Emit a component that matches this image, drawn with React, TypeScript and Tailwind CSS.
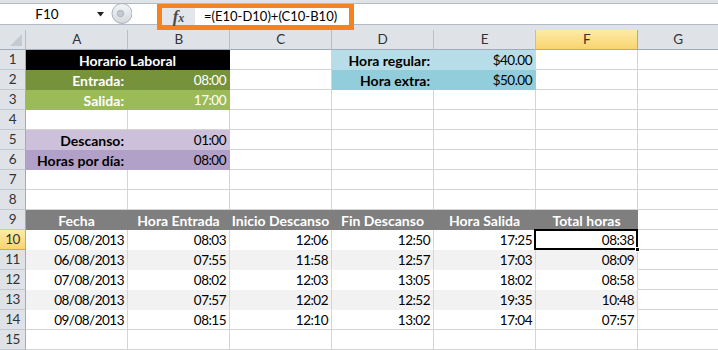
import React from "react";

type Cell = { t?: string; cls?: string; span?: number; sel?: boolean };

const R = "justify-end pr-[3px]";
const CT = "justify-center";
const W = "bg-white border-[#d4d4d4]";
const B = " font-bold text-[14px] tracking-normal ";

const dkGreen = "bg-[#76933c] border-[#76933c] text-white";
const ltGreen = "bg-[#9bbb59] border-[#9bbb59] text-white";
const aqua1 = "bg-[#b7dee8] border-[#b7dee8]";
const aqua2 = "bg-[#92cddc] border-[#92cddc]";
const pur1 = "bg-[#ccc0da] border-[#ccc0da]";
const pur2 = "bg-[#b1a0c7] border-[#b1a0c7]";
const hdr = "bg-[#7f7f7f] border-[#7f7f7f] text-white" + B + CT;

const e: Cell = {};
const empty6: Cell[] = [e, e, e, e, e, e];

const data = [
  ["05/08/2013", "08:03", "12:06", "12:50", "17:25", "08:38"],
  ["06/08/2013", "07:55", "11:58", "12:57", "17:03", "08:09"],
  ["07/08/2013", "08:02", "12:03", "13:05", "18:02", "08:58"],
  ["08/08/2013", "07:57", "12:02", "12:52", "19:35", "10:48"],
  ["09/08/2013", "08:15", "12:10", "13:02", "17:04", "07:57"],
];

const rows: Cell[][] = [
  [
    { t: "Horario Laboral", span: 2, cls: "bg-black border-black text-white" + B + CT },
    e,
    { t: "Hora regular:", cls: aqua1 + B + R },
    { t: "$40.00", cls: aqua1 + " " + R },
    e,
  ],
  [
    { t: "Entrada:", cls: dkGreen + B + R },
    { t: "08:00", cls: dkGreen + " " + R },
    e,
    { t: "Hora extra:", cls: aqua2 + B + R },
    { t: "$50.00", cls: aqua2 + " " + R },
    e,
  ],
  [
    { t: "Salida:", cls: ltGreen + B + R },
    { t: "17:00", cls: ltGreen + " " + R },
    e,
    e,
    e,
    e,
  ],
  empty6,
  [
    { t: "Descanso:", cls: pur1 + B + R },
    { t: "01:00", cls: pur1 + " " + R },
    e,
    e,
    e,
    e,
  ],
  [
    { t: "Horas por día:", cls: pur2 + B + R },
    { t: "08:00", cls: pur2 + " " + R },
    e,
    e,
    e,
    e,
  ],
  empty6,
  empty6,
  ["Fecha", "Hora Entrada", "Inicio Descanso", "Fin Descanso", "Hora Salida", "Total horas"].map(
    (t) => ({ t, cls: hdr })
  ),
  ...data.map((r, i) =>
    r.map((t, j) => ({
      t,
      sel: i === 0 && j === 5,
      cls:
        (i % 2 === 1
          ? "bg-[#f2f2f2] border-r-[#d4d4d4] border-b-[#f2f2f2] "
          : i === 4
          ? "bg-white border-[#d4d4d4] "
          : "bg-white border-r-[#d4d4d4] border-b-white ") + R,
    }))
  ),
  empty6,
];

const cols = ["A", "B", "C", "D", "E", "F", "G"];

function TopBar() {
  return (
    <div className="relative h-[30px] bg-[#dfe3e8]">
      <div className="absolute left-0 right-0 top-[3px] h-[22px] bg-white border-y border-[#b4bbc4]" />
      <div className="relative flex h-[30px] pt-[3px]">
        <div className="flex h-[22px] w-[108px] items-center">
          <span className="w-[94px] text-center text-[13.5px] tracking-normal text-black">F10</span>
          <svg width="8" height="5" viewBox="0 0 8 5" className="ml-[3px]">
            <path d="M0 0 H7 L3.5 4.5 Z" fill="#222" />
          </svg>
        </div>
        <div className="flex h-[22px] items-center">
          <svg width="24" height="24" viewBox="0 0 24 24">
            <defs>
              <linearGradient id="cg" x1="0" y1="0" x2="0" y2="1">
                <stop offset="0" stopColor="#f4f6f8" />
                <stop offset="1" stopColor="#d3d8de" />
              </linearGradient>
            </defs>
            <circle cx="14" cy="11.5" r="10" fill="url(#cg)" stroke="#aab2bc" strokeWidth="1" />
            <circle cx="12.5" cy="11.5" r="3.2" fill="#c3c9d0" stroke="#a4acb6" strokeWidth="0.8" />
          </svg>
        </div>
      </div>
      <div className="absolute left-[157px] top-[4px] flex h-[26px] w-[197px] border-x-[5px] border-t-[4px] border-b-[5px] border-[#f58220] bg-white">
        <div className="flex w-[33px] items-center justify-center bg-[#e3e6ea]">
          <span className="[font-family:'Liberation_Serif',serif] text-[17px] font-bold italic leading-none tracking-normal text-[#4a4a4a]">
            f<span className="text-[12px]">x</span>
          </span>
        </div>
        <div className="flex items-center pl-[9px] text-[13px] tracking-normal text-black">=(E10-D10)+(C10-B10)</div>
      </div>
    </div>
  );
}

function Grid() {
  return (
    <div className="grid grid-cols-[26px_repeat(6,102px)_1fr]">
      <div className="relative h-[20px] bg-[#dfe3e8] border-r border-b border-r-[#b4bbc4] border-b-[#9eabb9]">
        <svg width="14" height="14" viewBox="0 0 14 14" className="absolute right-[2px] bottom-[2px]">
          <path d="M13 1 V13 H1 Z" fill="#c4cad2" />
        </svg>
      </div>
      {cols.map((c) =>
        c === "F" ? (
          <div
            key={c}
            className="flex h-[20px] items-center justify-center border-r border-b border-r-[#e2a33f] border-b-[#e2a33f] bg-linear-to-b from-[#fdeba6] to-[#f8d46e] text-[#333]"
          >
            {c}
          </div>
        ) : (
          <div
            key={c}
            className={
              "flex h-[20px] items-center justify-center bg-[#dfe3e8] border-b border-b-[#9eabb9] text-[#333] " +
              (c === "G" ? "" : "border-r border-r-[#b8bfc8]")
            }
          >
            {c}
          </div>
        )
      )}
      {rows.map((row, ri) => {
        const n = ri + 1;
        const cells: React.ReactNode[] = [];
        cells.push(
          n === 10 ? (
            <div
              key="h"
              className="flex h-[20px] items-center justify-center border-r border-b border-r-[#e2a33f] border-b-[#e2a33f] bg-linear-to-b from-[#fdeba6] to-[#f8d46e] text-[#333]"
            >
              {n}
            </div>
          ) : (
            <div
              key="h"
              className="flex h-[20px] items-center justify-center bg-[#dfe3e8] border-r border-b border-r-[#9eabb9] border-b-[#c3c9d1] text-[#333]"
            >
              {n}
            </div>
          )
        );
        row.forEach((c, ci) => {
          const span = c.span ?? 1;
          cells.push(
            <div
              key={ci}
              className={
                "relative flex h-[20px] items-center whitespace-nowrap border-r border-b pt-[1px] " +
                (span === 2 ? "col-span-2 " : "") +
                (c.cls ?? W) +
                (c.sel ? " z-10" : " overflow-hidden")
              }
            >
              {c.t}
              {c.sel && (
                <>
                  <div className="pointer-events-none absolute left-[-2px] top-[-1px] right-[-1px] bottom-[-1px] border-2 border-black" />
                  <div className="absolute right-[-3px] bottom-[-3px] h-[5px] w-[5px] border border-white bg-black" />
                </>
              )}
            </div>
          );
        });
        cells.push(<div key="g" className="h-[20px] border-b border-[#d4d4d4] bg-white" />);
        return <React.Fragment key={ri}>{cells}</React.Fragment>;
      })}
    </div>
  );
}

export default function App() {
  return (
    <div className="h-[350px] w-[718px] overflow-hidden bg-white [font-family:Lato,sans-serif] text-[13.5px] tracking-[-0.5px] text-black">
      <TopBar />
      <Grid />
    </div>
  );
}
